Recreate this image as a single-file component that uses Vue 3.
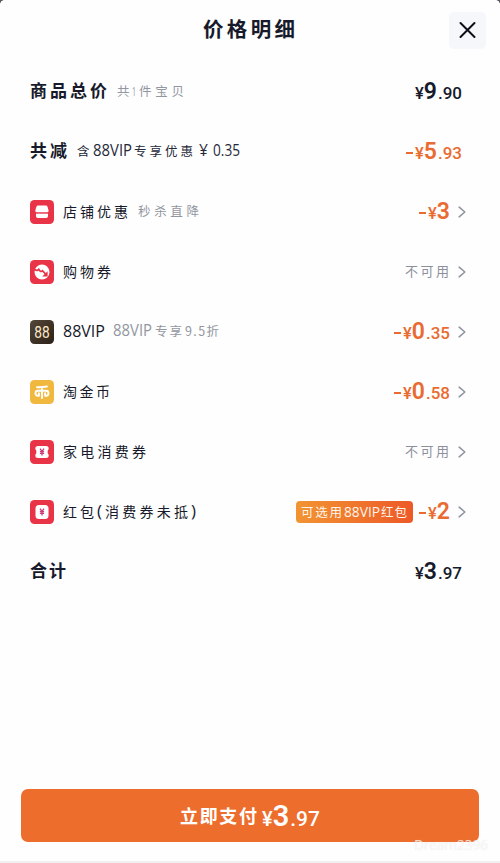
<script setup>
// Each text run is [text, x, width]; a fourth entry marks narrow latin lettering.
const rows = [
  { key: 'total', label: [['商品总价', 0, 77]], w: 77, bold: true, note: [['共', 0, 13], ['1', 15, 4, 1], ['件宝贝', 22, 45]], nw: 68, small: true, value: ['9', '.90'], dark: true },
  { key: 'minus', label: [['共减', 0, 37]], w: 37, bold: true, note: [['含', 0, 13], ['88VIP', 16, 39, 1], ['专享优惠', 57, 59], ['¥', 122, 9, 1], ['0.35', 136, 27, 1]], nw: 164, strong: true, value: ['5', '.93'] },
  { key: 'shop', icon: 'shop', label: [['店铺优惠', 0, 65]], w: 66, note: [['秒杀直降', 0, 61]], nw: 62, value: ['3', ''], arrow: true },
  { key: 'coupon', icon: 'coupon', label: [['购物券', 0, 48]], w: 49, off: true, arrow: true },
  { key: 'vip', icon: 'vip', label: [['88VIP', 0, 42, 1]], w: 42, note: [['88VIP', 0, 39, 1], ['专享', 42, 27], ['9.5折', 72, 34]], nw: 106, value: ['0', '.35'], arrow: true },
  { key: 'coin', icon: 'coin', label: [['淘金币', 0, 47]], w: 48, value: ['0', '.58'], arrow: true },
  { key: 'ticket', icon: 'ticket', label: [['家电消费券', 0, 83]], w: 83, off: true, arrow: true },
  { key: 'packet', icon: 'packet', label: [['红包', 0, 31], ['(', 34, 5, 1], ['消费券未抵', 42, 83], [')', 128, 5, 1]], w: 135, tag: [['可选用', 0, 41], ['88VIP', 43, 36, 1], ['红包', 80, 26]], value: ['2', ''], arrow: true },
  { key: 'sum', label: [['合计', 0, 36]], w: 37, bold: true, value: ['3', '.97'], dark: true },
]
</script>

<template>
  <main class="sheet">
    <i class="corner left"></i><i class="corner right"></i>
    <header class="head">
      <span></span>
      <h1><svg class="txt" width="93" height="28"><text x="0" y="21" textLength="92">价格明细</text></svg></h1>
      <button class="close" aria-label="关闭">
        <svg width="18" height="18" viewBox="0 0 18 18"><path d="M1.500 2 15.500 16M15.500 2 1.500 16" /></svg>
      </button>
    </header>
    <section class="rows">
      <div v-for="r in rows" :key="r.key" class="row">
        <svg v-if="r.icon" class="icon" :class="r.icon" width="24" height="24" viewBox="0 0 24 24">
          <defs v-if="r.icon === 'vip'">
            <linearGradient id="vipbg" x2="1" y2="1"><stop stop-color="#544738" /><stop offset="1" stop-color="#2c2118" /></linearGradient>
          </defs>
          <rect class="bg" width="24" height="24" rx="4.5" />
          <g v-if="r.icon === 'shop'" fill="#fff">
            <path d="M8.3 5.6h7.4q1.5 0 1.9 1.4l.9 3.200q.4 2-1.300 2H6.700q-1.700 0-1.300-2l.9-3.200Q6.800 5.600 8.300 5.600Z" />
            <path d="M6 13.400q1.500.9 3 0 1.500.9 3 0 1.500.9 3 0 1.500.9 3 0v2.900q0 1.800-1.800 1.800H7.800q-1.800 0-1.800-1.800Z" />
          </g>
          <g v-else-if="r.icon === 'coupon'">
            <circle cx="12" cy="12" r="7.500" fill="#fff" />
            <path d="M4.500 9.600q2.800 1.600 4.300-.2 1.700 3.400 3.700 1.300l3.800 4.100" class="redline" />
            <path d="M17.600 11.300v5.300h-5.400Z" fill="#e93448" />
          </g>
          <text v-else-if="r.icon === 'vip'" x="4.300" y="17.700" textLength="15.400" lengthAdjust="spacingAndGlyphs" class="eights">88</text>
          <path v-else-if="r.icon === 'coin'" class="bi" d="M7 7.200Q12 7.400 17 6.500M12 7.200V18M8.900 15.700H8q-2.500 0-2.500-2.500T8 10.700h8q2.500 0 2.500 2.500T16 15.700h-.9M8.900 13.200v2.500M15.100 13.200v2.500" />
          <g v-else>
            <path v-if="r.icon === 'ticket'" fill="#fff" d="M8 6h8q2.700 0 2.700 2.500 0 1.200-1 1.900v3.200q1 .7 1 1.900Q18.700 18 16 18H8q-2.700 0-2.700-2.500 0-1.200 1-1.900v-3.200q-1-.7-1-1.900Q5.300 6 8 6Z" />
            <rect v-else x="5.500" y="5" width="13" height="14" rx="3.500" fill="#fff" />
            <path class="yen" d="m10 8.700 2 2.700 2-2.700M9.900 11.600h4.200M9.900 13.400h4.200M12 11.400v4" />
          </g>
        </svg>
        <svg class="txt label" :class="{ bold: r.bold }" :width="r.w" height="28">
          <text v-for="t in r.label" :key="t[0]" :class="{ latin: t[3] }" :x="t[1]" y="19" :textLength="t[2]" :lengthAdjust="t[3] ? 'spacingAndGlyphs' : 'spacing'">{{ t[0] }}</text>
        </svg>
        <svg v-if="r.note" class="txt note" :class="{ strong: r.strong, small: r.small }" :width="r.nw" height="28">
          <text v-for="t in r.note" :key="t[0]" :class="{ latin: t[3] }" :x="t[1]" y="18" :textLength="t[2]" :lengthAdjust="t[3] ? 'spacingAndGlyphs' : 'spacing'">{{ t[0] }}</text>
        </svg>
        <span class="space"></span>
        <span v-if="r.tag" class="tag">
          <svg class="txt" width="107" height="22">
            <text v-for="t in r.tag" :key="t[0]" :class="{ latin: t[3] }" :x="t[1]" y="16" :textLength="t[2]" :lengthAdjust="t[3] ? 'spacingAndGlyphs' : 'spacing'">{{ t[0] }}</text>
          </svg>
        </span>
        <svg v-if="r.off" class="txt off" width="45" height="28"><text x="0" y="18" textLength="44">不可用</text></svg>
        <span v-if="r.value" class="price" :class="{ dark: r.dark }"><i v-if="!r.dark" class="minus"></i><small>¥</small><b>{{ r.value[0] }}</b><em v-if="r.value[1]">{{ r.value[1] }}</em></span>
        <svg v-if="r.arrow" class="arrow" width="8" height="12" viewBox="0 0 8 12"><path d="M1.200 1.200 6.800 6 1.200 10.800" /></svg>
      </div>
    </section>
    <button class="pay">
      <svg class="txt" width="77" height="30"><text x="0" y="22" textLength="77">立即支付</text></svg>
      <span class="price"><small>¥</small><b>3</b><em>.97</em></span>
    </button>
    <span class="mark">Dream2396</span>
    <div class="foot"></div>
  </main>
</template>

<style>
body { margin: 0; background: #fefefe; }
</style>

<style scoped>
.sheet { position: relative; box-sizing: border-box; width: 500px; height: 863px; overflow: hidden; display: flex; flex-direction: column; background: #fefefe; color: #171a2a; font-family: "Liberation Sans", "Noto Sans CJK SC", sans-serif; }
.corner { position: absolute; top: 0; width: 4px; height: 4px; }
.left { left: 0; background: radial-gradient(circle at 100% 100%, transparent 3.500px, #55565b 4px); }
.right { right: 0; background: radial-gradient(circle at 0 100%, transparent 3.500px, #55565b 4px); }
.head { display: grid; grid-template-columns: 1fr auto 1fr; align-items: center; height: 60px; padding: 0 14px 0 13px; flex: none; }
h1 { margin: 0 0 1px; height: 28px; }
h1 .txt { font-size: 20.500px; font-weight: 700; }
.txt { display: block; flex: none; overflow: visible; fill: currentColor; font-family: "Noto Sans CJK SC", sans-serif; }
.latin { font-family: "Open Sans", sans-serif; }
button { border: 0; padding: 0; font: inherit; }
.close { justify-self: end; display: flex; align-items: center; justify-content: center; width: 37px; height: 37px; border-radius: 5px; background: #f5f7fa; }
.close path { fill: none; stroke: #0d0f18; stroke-width: 2; stroke-linecap: round; }
.rows { padding: 2px 36px 0 30px; }
.row { height: 60px; display: flex; align-items: center; }
.icon { margin-right: 9px; flex: none; }
.bg { fill: #e93448; }
.coin .bg { fill: #f0b83f; }
.vip .bg { fill: url(#vipbg); }
.redline { fill: none; stroke: #e93448; stroke-width: 1.700; }
.eights { font: 16px Roboto, sans-serif; fill: #ffe7ca; }
.bi { fill: none; stroke: #fff; stroke-width: 1.900; stroke-linecap: round; stroke-linejoin: round; }
.yen { fill: none; stroke: #c93b78; stroke-width: 1.300; }
.label { font-size: 14px; }
.label .latin { font-size: 17px; }
.label.bold { font-size: 17px; font-weight: 700; }
.note { margin-left: 10px; color: #9296a0; font-size: 12.500px; }
.note .latin { font-size: 15.500px; }
.note.small .latin { font-size: 13px; }
.note.strong { color: #252838; }
.row .label:not(.bold) + .note { margin-left: 9px; }
.vip + .label + .note.note { margin-left: 8px; }
.space { flex: 1; }
.off { color: #8c909b; font-size: 13px; }
.arrow { margin: 0 -2px 0 8px; flex: none; }
.arrow path { fill: none; stroke: #9095a2; stroke-width: 1.600; stroke-linecap: round; stroke-linejoin: round; }
.price { display: flex; align-items: baseline; line-height: 28px; color: #e96b31; font-family: "Roboto", sans-serif; font-weight: 500; white-space: nowrap; }
.price.dark { margin-right: 1px; color: #171a2a; }
.row .price { padding-top: 1px; }
.row .price:last-child { margin-right: 2px; }
.price small { font-size: 16.500px; }
.price b { font-size: 23px; font-weight: 600; }
.price em { margin-left: 1px; font-size: 17px; font-style: normal; }
.minus { width: 7px; height: 2px; margin-right: 2px; background: currentColor; transform: translateY(-5px); }
.tag { display: flex; align-items: center; justify-content: center; width: 117px; height: 22px; margin-right: 6px; border-radius: 4px; color: #fff5e9; background: linear-gradient(90deg, #f29432, #ed5928); font-size: 12.500px; }
.tag .latin { font-size: 15px; }
.pay { display: flex; align-items: center; justify-content: center; flex: none; width: 458px; height: 53px; margin: 187px 0 0 21px; border-radius: 7px; background: #ed6d2d; color: #fff; }
.pay .txt { font-size: 18px; font-weight: 600; }
.pay .price { margin-left: 5px; padding-top: 3px; color: #fff; }
.pay small { font-size: 20px; }
.pay b { font-size: 29px; }
.pay em { font-size: 21px; }
.mark { position: absolute; left: 414px; top: 836px; color: rgba(255, 255, 255, .65); font: 13.500px/18px "Noto Sans", sans-serif; text-shadow: 0 0 1px rgba(210, 210, 210, .5); }
.foot { margin-top: auto; height: 2px; background: #f1f1f1; }
</style>
